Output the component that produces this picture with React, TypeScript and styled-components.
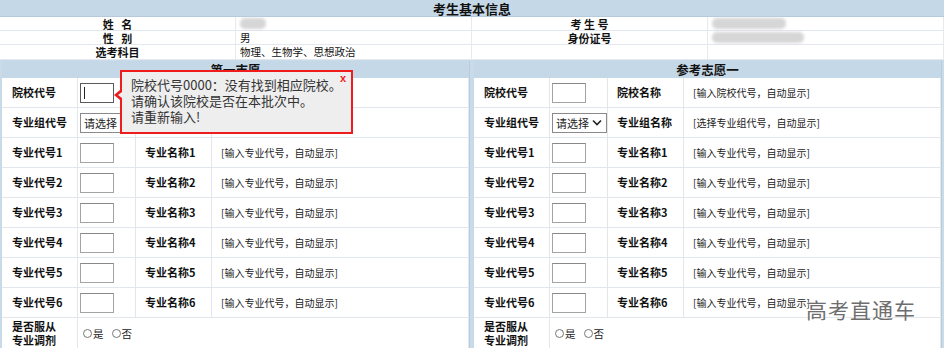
import React from "react";
import styled, { createGlobalStyle } from "styled-components";

const GlobalStyle = createGlobalStyle`
  body {
    margin: 0;
    background: #ffffff;
    font-family: "Noto Sans CJK SC", "Liberation Sans", sans-serif;
    color: #111;
  }
`;

const Page = styled.div`
  position: relative;
  width: 944px;
  height: 348px;
  overflow: hidden;
  background: #c9dbe8;
`;

const InfoHeader = styled.div`
  height: 16px;
  line-height: 17px;
  text-align: center;
  font-size: 13px;
  font-weight: 700;
  background: #c5d8e7;
  border-bottom: 1px solid #b7cadb;
`;

const InfoGrid = styled.div`
  display: grid;
  grid-template-columns: 236px 236px 236px 236px;
  background: #fff;
`;

const InfoCell = styled.div<{ $label?: boolean; $tall?: boolean }>`
  height: ${(p) => (p.$tall ? 14 : 13)}px;
  line-height: ${(p) => (p.$tall ? 14 : 14)}px;
  font-size: ${(p) => (p.$label ? 11 : 10.5)}px;
  font-weight: ${(p) => (p.$label ? 700 : 400)};
  text-align: ${(p) => (p.$label ? "center" : "left")};
  padding-left: ${(p) => (p.$label ? 0 : 4)}px;
  border-bottom: 1px solid #e3e8ee;
  border-right: 1px solid #e6eaef;
  white-space: nowrap;
`;

const Blur = styled.span<{ $w: number }>`
  display: inline-block;
  width: ${(p) => p.$w}px;
  height: 11px;
  margin-top: 1px;
  border-radius: 5px;
  background: #d6d6d6;
  filter: blur(1.5px);
  vertical-align: top;
`;

const Panels = styled.div`
  display: flex;
  gap: 4px;
  padding: 1px 2px 0 2px;
  background: #c9dbe8;
`;

const Panel = styled.div`
  width: 468px;
  background: #fff;
  border-right: 1px solid #b9ccdc;
`;

const PanelHeader = styled.div`
  height: 17px;
  line-height: 17px;
  text-align: center;
  font-size: 12.5px;
  font-weight: 700;
  background: #c5d8e7;
`;

const Row = styled.div`
  display: grid;
  grid-template-columns: 76px 58px 76px 1fr;
  height: 29px;
  border-bottom: 1px solid #e1e7ed;
`;

const WideRow = styled(Row)`
  grid-template-columns: 76px 1fr;
  height: 30px;
`;

const Cell = styled.div<{ $pad?: number }>`
  display: flex;
  align-items: center;
  padding-left: ${(p) => p.$pad ?? 9}px;
  border-right: 1px solid #e1e7ed;
  overflow: hidden;
  white-space: nowrap;
`;

const Label = styled.span<{ $lh?: number }>`
  font-size: 11px;
  font-weight: 700;
  line-height: ${(p) => p.$lh ?? 13}px;
  color: #111;
`;

const Hint = styled.span`
  font-size: 10px;
  color: #222;
`;

const CodeInput = styled.input`
  box-sizing: border-box;
  width: 34px;
  height: 20px;
  margin: 0;
  padding: 0;
  border: 1px solid #a3a3a3;
  border-top-color: #888;
  background: #fff;
  outline: none;
`;

const FocusBox = styled.div`
  position: relative;
  box-sizing: border-box;
  width: 34px;
  height: 20px;
  border: 1px solid #5b5b5b;
  background: #fff;

  &::after {
    content: "";
    position: absolute;
    left: 3px;
    top: 3px;
    width: 1px;
    height: 12px;
    background: #222;
  }
`;

const SelectBox = styled.div`
  display: flex;
  align-items: center;
  box-sizing: border-box;
  width: 56px;
  height: 20px;
  padding-left: 3px;
  border: 1px solid #8a8a8a;
  background: #fff;
  font-size: 11px;
  color: #222;
  gap: 3px;
`;

const Radio = styled.span`
  display: inline-flex;
  align-items: center;
  gap: 1px;
  margin-right: 8px;
  font-size: 10.5px;
  color: #222;

  &::before {
    content: "";
    width: 9px;
    height: 9px;
    border: 1px solid #777;
    border-radius: 50%;
    box-sizing: border-box;
  }
`;

const Popup = styled.div`
  position: absolute;
  left: 120px;
  top: 70px;
  box-sizing: border-box;
  width: 233px;
  height: 64px;
  padding: 5px 0 0 9px;
  background: #eeeeee;
  border: 2px solid #ee1c1c;
  font-size: 13px;
  line-height: 16px;
  color: #333;
  white-space: nowrap;

  &::before {
    content: "";
    position: absolute;
    left: -8px;
    top: 18px;
    border: 5px solid transparent;
    border-right: 6px solid #ee1c1c;
    border-left: 0;
  }
  &::after {
    content: "";
    position: absolute;
    left: -4px;
    top: 20px;
    border: 3px solid transparent;
    border-right: 4px solid #eeeeee;
    border-left: 0;
  }
`;

const Close = styled.span`
  position: absolute;
  right: 5px;
  top: 0px;
  font-size: 11px;
  font-weight: 700;
  color: #f01c1c;
  font-family: "Liberation Sans", sans-serif;
  line-height: 12px;
`;

const Watermark = styled.div`
  position: absolute;
  left: 806px;
  top: 294px;
  font-size: 21px;
  letter-spacing: 1px;
  color: #6e6e6e;
  text-shadow: 0 0 2px #fff, 0 0 1px #fff;
`;

const Chevron = () => (
  <svg width="10" height="7" viewBox="0 0 10 7">
    <path d="M1 1.5 L5 5.5 L9 1.5" fill="none" stroke="#222" strokeWidth="1.6" />
  </svg>
);

const majors = [1, 2, 3, 4, 5, 6];

const WishPanel = ({ title, first }: { title: string; first?: boolean }) => (
  <Panel>
    <PanelHeader>{title}</PanelHeader>
    <Row>
      <Cell $pad={10}><Label>院校代号</Label></Cell>
      <Cell $pad={2}>{first ? <FocusBox /> : <CodeInput />}</Cell>
      <Cell><Label>院校名称</Label></Cell>
      <Cell><Hint>[输入院校代号，自动显示]</Hint></Cell>
    </Row>
    <Row>
      <Cell $pad={10}><Label>专业组代号</Label></Cell>
      <Cell $pad={2}>
        <SelectBox>
          请选择
          <Chevron />
        </SelectBox>
      </Cell>
      <Cell><Label>专业组名称</Label></Cell>
      <Cell><Hint>[选择专业组代号，自动显示]</Hint></Cell>
    </Row>
    {majors.map((n) => (
      <Row key={n}>
        <Cell $pad={10}><Label>专业代号{n}</Label></Cell>
        <Cell $pad={2}><CodeInput /></Cell>
        <Cell><Label>专业名称{n}</Label></Cell>
        <Cell><Hint>[输入专业代号，自动显示]</Hint></Cell>
      </Row>
    ))}
    <WideRow>
      <Cell $pad={10}>
        <Label $lh={14}>
          是否服从
          <br />
          专业调剂
        </Label>
      </Cell>
      <Cell $pad={5}>
        <Radio>是</Radio>
        <Radio>否</Radio>
      </Cell>
    </WideRow>
  </Panel>
);

export default function App() {
  return (
    <>
      <GlobalStyle />
      <Page>
        <InfoHeader>考生基本信息</InfoHeader>
        <InfoGrid>
          <InfoCell $label>姓&nbsp;&nbsp;&nbsp;名</InfoCell>
          <InfoCell><Blur $w={26} /></InfoCell>
          <InfoCell $label>考 生 号</InfoCell>
          <InfoCell><Blur $w={74} /></InfoCell>
          <InfoCell $label>性&nbsp;&nbsp;&nbsp;别</InfoCell>
          <InfoCell>男</InfoCell>
          <InfoCell $label>身份证号</InfoCell>
          <InfoCell><Blur $w={92} /></InfoCell>
          <InfoCell $label $tall>选考科目</InfoCell>
          <InfoCell $tall>物理、生物学、思想政治</InfoCell>
          <InfoCell $tall />
          <InfoCell $tall />
        </InfoGrid>
        <Panels>
          <WishPanel title="第一志愿" first />
          <WishPanel title="参考志愿一" />
        </Panels>
        <Popup>
          院校代号0000：没有找到相应院校。
          <br />
          请确认该院校是否在本批次中。
          <br />
          请重新输入!
          <Close>x</Close>
        </Popup>
        <Watermark>高考直通车</Watermark>
      </Page>
    </>
  );
}
